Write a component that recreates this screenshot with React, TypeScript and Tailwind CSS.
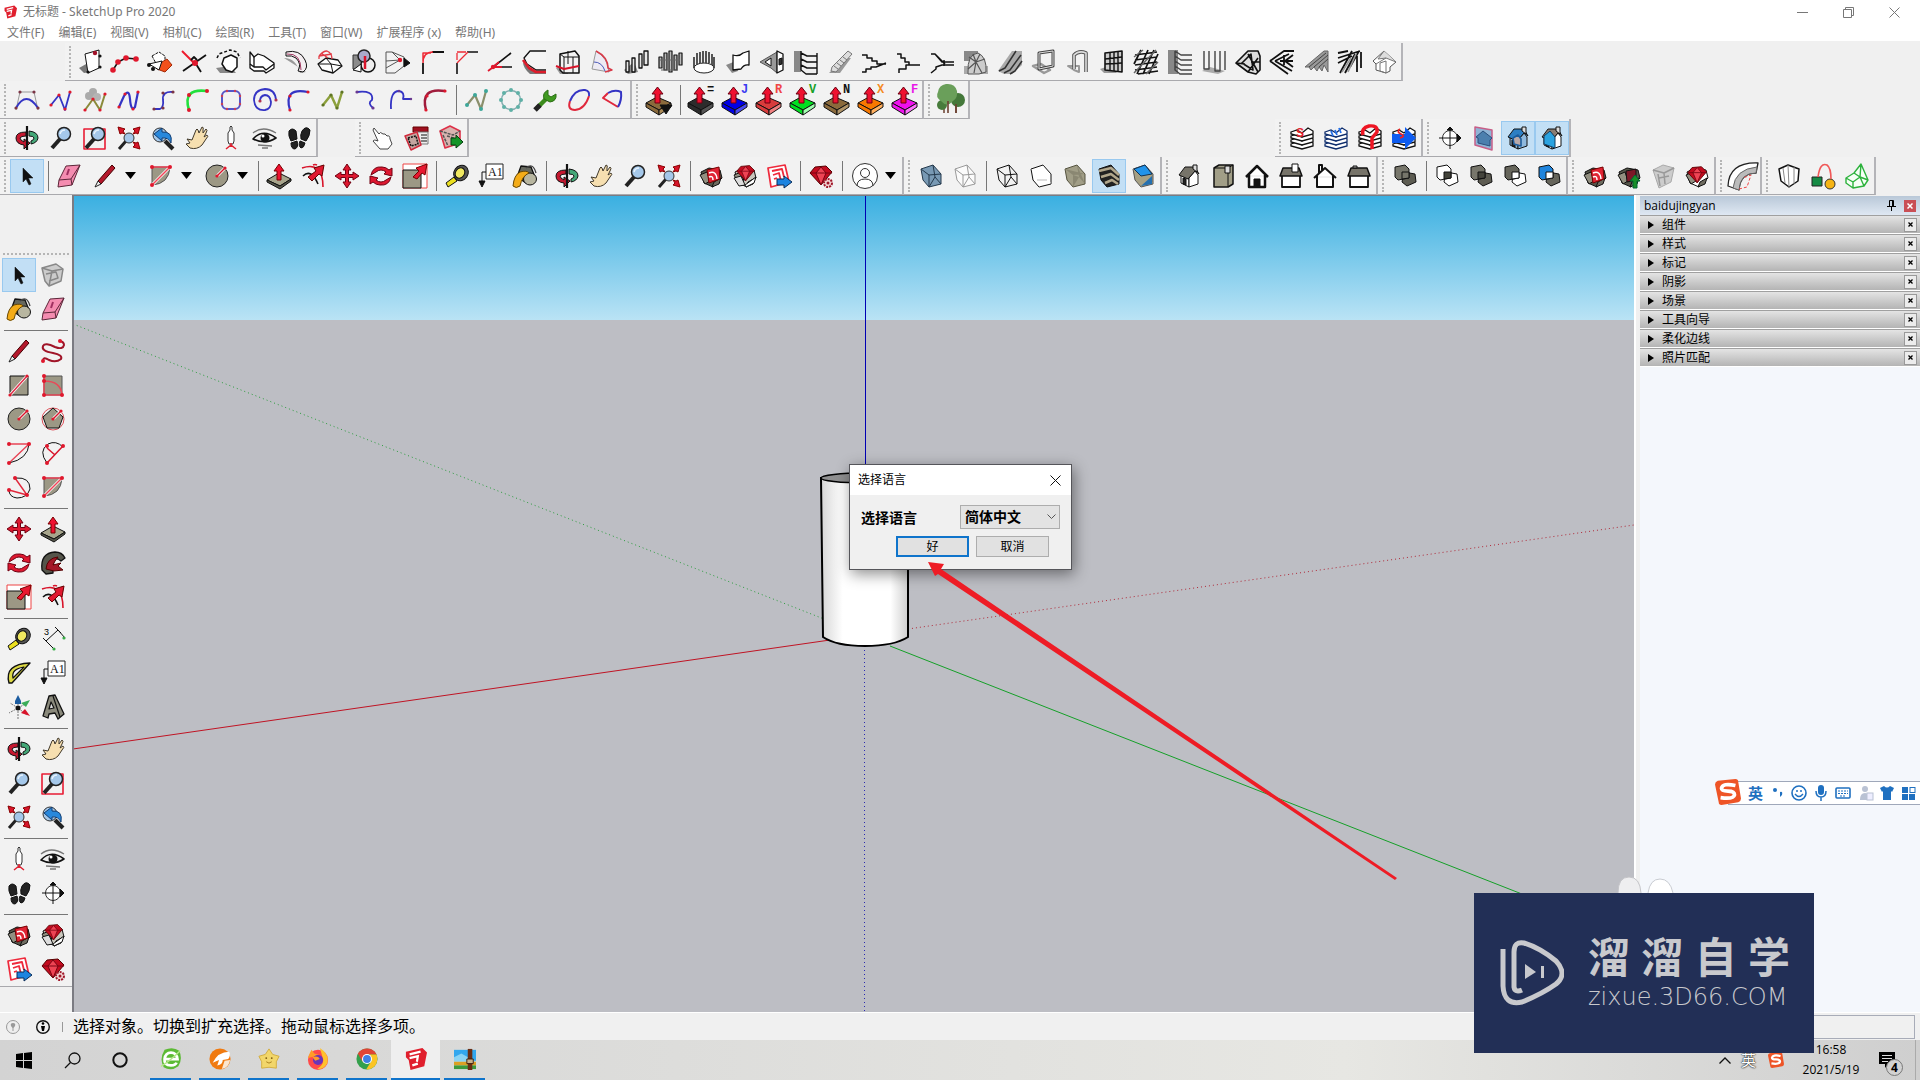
import type { ReactNode } from "react";

interface ShapeProps {
  d: string
  f?: string
  s?: string
  w?: number
  dash?: string
}

function P({ d, f = "none", s = "#111", w = 1, dash }: ShapeProps) {
  return <path d={d} fill={f} stroke={s} strokeWidth={w} strokeDasharray={dash} strokeLinejoin="round" />
}

function Dots({ at, c = "#e0182d", r = 1.6 }: { at: number[][], c?: string, r?: number }) {
  return <>{at.map(([x, y]) => <circle key={`${x}-${y}`} cx={x} cy={y} r={r} fill={c} />)}</>
}

const RED = "#d8142a"
const TAUPE = "#9c9885"
const BLUE = "#3434c4"

function PushIcon({ top, side, letter, color }: { top: string, side: string, letter?: string, color?: string }) {
  return (
    <>
      <P d="M-1 15L10 9L24 15L12 22Z" f={top} />
      <P d="M-1 15L12 22V27L-1 19Z" f={top} />
      <P d="M24 15L12 22V27L24 19Z" f={side} />
      <P d="M8 15V6H5L10.500 -1L16 6H13V15Z" f="#ee1130" s="#6a0010" />
      {letter && <text x="18" y="5" fontSize="12" fontWeight="700" fontFamily="Liberation Mono, monospace" fill={color}>{letter}</text>}
    </>
  )
}

function Cube({ fill, side = fill, line = "#111", wire }: { fill: string, side?: string, line?: string, wire?: boolean }) {
  return (
    <>
      <P d="M2 5L14 1L22 10V20L10 23L4 16Z" f={fill} s={line} />
      <P d="M14 1L16 13L22 20M2 5L10 11L22 10M10 11V23L16 13" f={wire ? "none" : side} s={wire ? line : "none"} w={1} />
    </>
  )
}

function Magnifier() {
  return (
    <>
      <P d="M3 22L11 13" s="#222" w={4} />
      <circle cx="15" cy="8" r="6.500" fill="#a5c8ea" stroke="#222" strokeWidth="1.500" />
      <P d="M11 8Q12 4 16 4" s="#e6f2fc" w={1.5} />
    </>
  )
}

function Box({ f = "#55564a" }: { f?: string }) {
  return (
    <>
      <P d="M2 8L10 4L21 6L23 14L14 23L5 19Z" f={f} />
      <P d="M1 11L8 8L11 17L6 20Z" f="#928f80" />
      <P d="M15 18L22 14L20 20L13 23Z" f="#6e6c60" />
    </>
  )
}

function Solids({ a, b, c }: { a: string, b: string, c: string }) {
  return (
    <>
      <P d="M11 8L22 10L23 18L14 22L9 18Z" f={b} />
      <P d="M2 3L12 1L16 5V14L5 16L2 13Z" f={a} />
      <P d="M9 8H16V14L9 15Z" f={c} />
    </>
  )
}

function House({ wall = "#fff", roof = "#77746a" }: { wall?: string, roof?: string }) {
  return (
    <>
      <P d="M4 11L12 15V23L4 19Z" f={wall} />
      <P d="M12 14L18 7L21 11V20L12 23Z" f={wall} />
      <P d="M2 11L8 3H18L22 10L18 7L11 15Z" f={roof} />
      <P d="M16 1H20V8L16 5Z" f="#ddd" />
      <P d="M6 14V20L9 21V15Z" f="#222" />
    </>
  )
}

function Layers({ c, children }: { c: string, children?: ReactNode }) {
  return (
    <>
      {[18, 14, 10, 6].map((y) => (
        <path key={y} d={`M1 ${y}L7 ${y - 2}L12 ${y + 1}L18 ${y - 4}L23 ${y - 1}V${y + 2}L12 ${y + 5}L1 ${y + 2}Z`} fill="#fff" stroke={c} strokeWidth="1.300" />
      ))}
      {children}
    </>
  )
}

const gem = (
  <>
    <P d="M1 9L6 3L17 2L23 8L12 21Z" f="#c40c20" s="#500" />
    <P d="M1 9H23M7 9L12 21L17 9L12 3Z" f="#ee4454" s="#7a0412" />
  </>
)

const icons: Record<string, ReactNode> = {
  // modelling plug-ins
  face: <><P d="M-1 18L8 13L10 22L4 23Z" f="#777" s="none" /><P d="M5 4L19 0V18L8 23Z" f="#fff" /><Dots at={[[15, 3]]} c="#a3122a" r={2.2} /><Dots at={[[8, 22], [20, 17], [20, 6]]} c="#111" /></>,
  nodes: <><P d="M-1 20L4 12L12 8L22 9" w={1.5} /><Dots at={[[-1, 20], [4, 12], [12, 8], [22, 9]]} r={2.8} /></>,
  orangeBox: <><P d="M4 6L11 2L17 6V13L10 17Z" f="#fff" dash="3 1" /><P d="M14 12L19 9L24 15L17 22L9 19Z" f="#f2501a" s="#a32a08" /><P d="M1 14L14 11L11 20Z" f="#fff" /><Dots at={[[1, 15], [5, 19]]} c="#111" r={2} /></>,
  cross: <><P d="M0 1L11 12" s="#ee1c2e" w={2} /><P d="M1 21L24 5M9 10L12 7L15 10M14 14L19 22" w={1.8} /><Dots at={[[13, 13]]} r={3} /></>,
  hexDash: <><P d="M0 18L14 16L20 23H4Z" f="#888" s="none" /><P d="M1 8L3 4L14 0L21 2L24 8" dash="3 2" w={1.5} /><P d="M8 8L15 5L21 8V17L16 22L10 20L6 14Z" f="#fff" w={1.5} /></>,
  block: <><P d="M0 2V18L4 21H14L16 23L24 18V13L14 6L8 4L4 7Z" f="#fff" w={1.3} /><P d="M0 14L4 17H13L16 20L24 14M4 7V17" w={1.3} /></>,
  tube: <><P d="M0 8Q12 8 16 23L22 22" f="#999" s="none" /><P d="M2 2Q16 -1 21 10Q25 18 19 22L14 21Q18 14 12 8Q8 5 2 6Z" f="#f4eef1" /><P d="M3 4Q17 3 17 20" s="#a33b63" /></>,
  dome: <><P d="M0 14L8 8L20 10L24 16L15 23L4 20Z" f="#fff" w={1.3} /><P d="M8 8L13 14L24 16M0 14L13 14L15 23" /><P d="M1 6Q5 1 9 1Q14 3 14 9M1 6L14 4M3 3L10 8M1 6V9" s="#e23b45" w={1.3} /></>,
  sphere: <><P d="M1 5H12V19H1Z" f="#8b8b8b" s="#333" /><circle cx="16" cy="15" r="7" fill="#eee" stroke="#111" strokeWidth="1.500" /><circle cx="12" cy="6" r="6" fill="#aaaacb" stroke="#222" strokeWidth="1.500" /><P d="M13 6V19" s={RED} w={2.5} /><P d="M1 20L9 14L9 22Z" f="#fff" /></>,
  prism: <><P d="M0 2H6L18 7V16L9 23H0Z" f="#f2f2f2" s="#555" /><P d="M0 11L14 10M0 18L14 10M6 2L14 10" s="#555" /><P d="M18 8L24 13L18 17Z" f="#111" /><Dots at={[[14, 10]]} r={2.2} /></>,
  fillet: <><P d="M3 24V13M12 2H24" w={1.8} /><P d="M3 13Q3 2 13 2M3 11V3H11" s="#ee2b36" w={1.5} /></>,
  chamfer: <><P d="M3 24V13M13 2H24" w={1.6} /><P d="M3 13L14 2M3 3V10M3 2H12" s="#ee2b36" w={1.3} /></>,
  angle: <><P d="M4 18L23 3M6 17H24" w={1.6} /><P d="M11 12L5 17H14M0 21L8 15" s="#e0182d" w={1.8} /><Dots at={[[5, 17]]} r={2.2} /></>,
  roundL: <><P d="M1 12Q8 22 24 22V24H8Q1 18 1 12Z" f="#777" s="none" /><P d="M24 1L8 1L2 8L5 14L14 20H24" f="#f4f4f4" w={1.3} /><P d="M1 10L7 18L14 22H24" s="#dd1c2b" w={2.6} /></>,
  frameRed: <><P d="M0 18L12 14V24H4Z" f="#999" s="none" /><P d="M4 4L19 1L23 6V23H7L4 20Z" f="#f3f3f3" w={1.5} /><P d="M4 4L8 7H23M8 7V23M17 7V23M12 1V14" /><P d="M0 16L8 19L23 16" s={RED} w={2} /></>,
  sail: <><P d="M6 1L2 19L19 22Q18 8 6 1Z" f="#edeaf3" s="#999" /><P d="M6 1Q18 7 18 18L22 20L15 22" s="#d83a48" w={1.5} /><P d="M4 12Q12 12 15 21" s="#4a59b8" /></>,
  bars: <><P d="M0 20L10 12L14 22L4 24Z" f="#888" s="none" /><P d="M2 11H5V22H2ZM8 8H11V22H8ZM15 4H18V18H15ZM20 1H24V15H20Z" f="#e8e8e8" w={1.3} /></>,
  bars2: <><P d="M1 7H4V18H1ZM6 3H9V20H6ZM11 1H14V22H11ZM16 5H19V20H16ZM21 3H24V15H21Z" f="#bbb" w={1.2} /><P d="M3 20H20M2 10H22" s="#666" /></>,
  fence: <><ellipse cx="12" cy="18" rx="10" ry="5" fill="#fff" stroke="#222" /><P d="M2 18V7M5 15V3M8 13V2M11 13V1M14 13V1M17 13V2M20 15V4M22 18V7" s="#444" w={1.8} /></>,
  flag: <><P d="M0 15L10 11L12 21L6 23Z" f="#888" s="none" /><P d="M7 5Q13 7 17 3L23 1V15Q18 14 15 19L7 20Z" f="#fff" w={1.3} /></>,
  triWindow: <><P d="M0 12L17 2V23L11 18Z" f="#999" s="#555" /><P d="M5 12L11 8V16Z" f="#fff" /><P d="M17 1L23 4V20L17 23Z" f="#fff" w={1.3} /><P d="M19 9L22 8V14L19 15Z" f="#333" /></>,
  shelves: <><P d="M0 1H7V22H0Z" f="#888" s="none" /><P d="M7 1V20L12 24H23M7 3L13 6H23M7 9L13 12H23M7 15L13 18H23M23 3V24" f="#eee" w={1.4} /></>,
  ramp: <><P d="M1 23L16 8H23L12 23Z" f="#999" s="none" /><P d="M4 17L20 1L24 4L8 22L3 21Z" f="#ddd" s="#777" /><P d="M6 16L10 19M9 13L13 16M12 10L16 13M15 7L19 10" s="#777" /></>,
  stairsA: <P d="M0 5H5V8H10V11H15V14H24M0 22H4V19H9V17H14L24 13" w={1.5} />,
  stairsB: <P d="M1 4H5V8H9V12H13V15H24M3 23V19H10V15H24" w={1.5} />,
  stairsC: <P d="M1 4H5L12 12H24M1 23L6 19V17L12 15H24M6 5L15 14M14 10V16" w={1.5} />,
  spiral: <><P d="M0 1H14V11H0Z" f="#888" s="none" /><P d="M0 16H24V24H0Z" f="#aaa" s="none" /><P d="M4 23Q3 4 14 3Q23 7 22 22L15 24H4Z" f="#ccc" s="#555" /><P d="M12 12L5 7M12 12L9 4M12 12L16 4M12 12L21 9M12 12L4 19M12 12L10 23M12 12L18 23" w={1.2} s="#555" /></>,
  escalator: <><P d="M0 21L14 1H24V15L14 24H6Z" f="#aaa" s="none" /><P d="M1 21L7 18L18 1M6 23L12 20L23 5M12 24L17 21L24 11" w={1.5} s="#333" /></>,
  frameBox: <><P d="M1 16L9 14L18 20L12 23Z" s="#999" w={2.5} /><P d="M7 3L21 1V16L7 19Z" f="none" s="#444" w={3} /><P d="M7 3L21 1V16L7 19Z" s="#ddd" /></>,
  arch: <><P d="M2 16H13V22L8 20Z" s="#999" w={2} /><P d="M8 19V5Q13 0 20 3V22" s="#555" w={3.6} /><P d="M8 19V5Q13 0 20 3V22" s="#ddd" w={1.6} /></>,
  grid: <><P d="M0 19L9 16L17 23H4Z" f="#999" s="none" /><P d="M5 3L22 1V22L5 20Z" f="#ccc" w={1.6} /><P d="M10 2V21M14 2V21M18 2V21M5 9L22 7M5 14L22 13" w={1.4} /></>,
  weave: <><P d="M1 5L23 2M1 10L23 7M1 15L23 12M1 20L23 17M3 24L14 0M9 24L20 0M15 24L24 4M0 14L7 0M4 24L24 21" w={1.7} /><P d="M0 7L9 0M0 23L22 0M12 24L24 12" s="#666" w={1.5} /></>,
  louvre: <><P d="M0 0H10V24H0Z" f="#888" s="none" /><P d="M7 1L13 5H24M7 6L13 10H24M7 11L13 15H24M7 16L13 20H24M7 1V20L12 24H24" s="#444" w={1.5} /></>,
  panels: <><P d="M0 21L8 17L23 21L16 24Z" f="#aaa" s="none" /><P d="M2 1V19H7V1M13 1V21H18V1M23 1V20" s="#444" w={1.4} /></>,
  trussA: <><P d="M0 13L12 1H22L24 6V20L20 24L12 22Z" f="#ddd" w={1.6} /><P d="M6 13L15 4L17 20ZM15 12H24M12 4L22 22M0 13L9 14M12 22L22 8" w={1.6} /></>,
  trussB: <P d="M0 11L14 1H24M0 11L18 24M5 11L19 4M5 11L22 21M10 11H23M14 5V15M15 11L23 5M15 11L23 17" w={1.8} />,
  slats: <><P d="M1 17L20 1H24V22L20 15L18 21L15 17L13 21L10 17L7 20L5 17Z" f="#999" s="#666" /><P d="M5 17L22 3M10 17L24 5M15 17L24 9" s="#444" /></>,
  rafters: <><P d="M0 3L10 1M0 8L22 1M2 23L14 1M0 13L14 6M7 23L17 4M12 17L21 1M19 22V6M23 18V2" w={1.8} /><P d="M4 22L13 8M10 22L18 4" s="#999" w={1.6} /></>,
  roof: <><P d="M1 11L12 1L24 12L18 17V21L14 23L4 20V14Z" f="#fff" s="#555" /><P d="M12 1L6 9L14 8L24 12" f="#ddd" s="#777" /><P d="M8 13V21L14 23V11ZM4 14L14 8" s="#777" /></>,
  // curves
  bezierArc: <><P d="M5 4H19M5 4L1 22M19 4L23 22" s="#999" /><P d="M1 20Q11 2 23 20" s={BLUE} w={2} /><Dots at={[[5, 4], [19, 4], [1, 20], [23, 20]]} c="#7c3444" /></>,
  polyBlue: <><P d="M2 17L10 7L16 22L21 4" s={BLUE} w={1.8} /><Dots at={[[2, 17], [10, 7], [16, 21], [21, 4]]} /></>,
  polyCloud: <><circle cx="6" cy="8" r="4" fill="#aaa" /><circle cx="10" cy="4" r="4" fill="#aaa" /><circle cx="14" cy="9" r="4" fill="#b4b4b4" /><P d="M2 22L10 11L17 22L22 6" s="#8a8a3a" w={2} /><Dots at={[[2, 22], [10, 11], [17, 22], [22, 6]]} /></>,
  sine: <><P d="M2 19L7 8Q12 0 13 11Q14 24 18 19L21 4" s={BLUE} w={2.2} /><Dots at={[[2, 19], [8, 6], [16, 21], [21, 4]]} /></>,
  sCurve: <><P d="M3 21H9Q13 19 12 12Q11 3 22 4" s={BLUE} w={1.8} /><Dots at={[[3, 21], [12, 20], [12, 5], [22, 4]]} c="#7c3444" /></>,
  greenArc: <><P d="M4 22Q-3 0 22 3" s="#22e03c" w={2.6} /><Dots at={[[4, 22], [4, 7], [22, 3]]} r={2} /></>,
  roundSq: <><rect x="3" y="3" width="18" height="18" rx="5" fill="none" stroke="#5555c8" strokeWidth="2" /><Dots at={[[8, 3], [16, 3], [3, 8], [21, 8], [3, 16], [21, 16], [8, 21], [16, 21]]} r={1.2} c="#c8405a" /></>,
  swirl: <><P d="M23 12Q22 1 12 1Q1 2 1 12Q2 23 12 22Q18 21 18 14Q17 7 12 7Q7 8 7 13" s={BLUE} w={1.8} /><Dots at={[[23, 12], [7, 13]]} c="#b03050" /></>,
  arcBlue: <><P d="M3 22Q-4 -1 21 4" s={BLUE} w={2.2} /><Dots at={[[3, 22], [3, 8], [21, 4]]} /></>,
  polyGreen: <><P d="M2 17L10 7L16 20L21 4" s="#8ca03c" w={2.5} /><Dots at={[[2, 17], [10, 7], [16, 20], [21, 4]]} c="#5f7524" /></>,
  hookA: <><P d="M2 4Q19 2 17 12Q12 15 18 20" s={BLUE} w={1.8} /><Dots at={[[2, 4], [18, 20]]} c="#6a3a90" /></>,
  hookB: <><P d="M2 21Q1 3 10 3Q16 4 14 11H22" s={BLUE} w={1.8} /><Dots at={[[22, 11], [10, 3]]} c="#6a3a90" r={1.2} /></>,
  arcRed: <><P d="M3 22Q-3 -1 22 3" s="#a01c3c" w={2.5} /><Dots at={[[3, 22], [4, 8], [22, 3]]} /></>,
  polyTeal: <><P d="M2 17L10 7L16 21L21 3" s="#8a8f6c" w={2.2} /><Dots at={[[2, 17], [10, 7], [16, 21], [21, 3]]} c="#3da79a" r={2} /></>,
  ring: <><circle cx="12" cy="12" r="9.500" fill="none" stroke="#84aeb0" strokeWidth="1.500" /><Dots at={[[12, 2], [19, 5], [22, 12], [19, 19], [12, 22], [5, 19], [2, 12], [5, 5]]} c="#5fb0a6" r={2} /></>,
  wrench: <><P d="M5 19L14 10" s="#3c8c1c" w={4.5} /><P d="M15 2L15 7L18 9L23 6Q24 13 17 14L11 11Q9 5 15 2Z" f="#3f9a20" s="#2b6e14" /><P d="M2 22L7 17" s="#222" w={5} /></>,
  loop: <><P d="M3 13Q0 22 8 22Q18 21 22 8" s="#e0283c" w={2} /><P d="M3 13Q8 1 18 2Q23 3 22 8" s={BLUE} w={2} /></>,
  pie: <><P d="M17 19L2 10L7 5" s="#e0283c" w={2} /><P d="M7 5Q14 1 20 4Q21 12 17 19" s={BLUE} w={2} /></>,
  pushMenu: <><PushIcon top="#8a6a3c" side="#aa8a58" /><P d="M13 17H25L19 26Z" f="#111" /></>,
  pushEq: <PushIcon top="#2c2c2c" side="#555" letter="=" color="#111" />,
  pushJ: <PushIcon top="#0000e6" side="#4a4af2" letter="J" color="#3a3af0" />,
  pushR: <PushIcon top="#d83c3c" side="#f08080" letter="R" color="#f04444" />,
  pushV: <PushIcon top="#00e020" side="#a0ffb0" letter="V" color="#18a028" />,
  pushN: <PushIcon top="#8a6a3c" side="#b09468" letter="N" color="#111" />,
  pushX: <PushIcon top="#f87800" side="#ffb060" letter="X" color="#f58a1e" />,
  pushF: <PushIcon top="#ee10ee" side="#ff70ff" letter="F" color="#e818e8" />,
  tree: <><P d="M5 17V25M17 15V25" s="#6b4030" w={1.5} /><circle cx="3" cy="17" r="5" fill="#487c3c" /><circle cx="19" cy="12" r="7" fill="#44783a" /><P d="M-1 4Q0 -3 7 -4Q16 -5 18 3Q19 10 14 13Q8 20 2 13Q-4 9 -1 4Z" f="#6a9f5a" s="none" /><P d="M9 13V25M17 16V25" s="#6b4030" w={1.6} /></>,
  // camera
  orbit: <><P d="M11 6Q1 6 1 12Q1 18 9 19V23L15 17L9 13V16Q5 14 5 12Q6 10 11 10Z" f="#c41830" /><P d="M14 5Q23 6 23 12Q22 17 16 18V15Q19 14 19 12Q19 10 14 10Z" f="#44a878" /><P d="M12 0V24" w={2.2} /></>,
  zoom: <Magnifier />,
  zoomWindow: <><P d="M1 3H22V23H1Z" s="#e81c34" w={1.6} /><Magnifier /></>,
  zoomExtents: <><P d="M2 23L9 15" s="#222" w={3} /><circle cx="12" cy="12" r="5" fill="#a5c8ea" stroke="#333" /><P d="M1 1L8 3L6 5L8 8L5 7L3 8ZM23 1L16 3L18 5L16 8L19 7L21 8ZM23 23L16 21L18 19L16 16L19 17L21 16Z" f={RED} s="#800" /></>,
  previous: <><circle cx="9" cy="9" r="7" fill="#a5c8ea" stroke="#333" /><P d="M14 15L22 23" s="#222" w={4} /><P d="M3 8L11 2V6Q22 5 20 17Q17 11 11 12V15Z" f="#2888dc" s="#123c70" /></>,
  hand: <P d="M2 13L7 14L11 4Q12 2 13 4L14 7L17 1Q19 1 18 4L18 7L21 3Q23 4 21 7L19 11L22 9Q24 10 21 13L17 19Q12 24 5 22L1 18L5 17Z" f="#f6dfb0" s="#40382a" />,
  camera: <><P d="M11 1Q12 -1 13 1V4L15 7V15L14 18H10L9 15V7L11 4Z" f="#fff" s="#333" /><P d="M7 23L12 19L17 23M12 17V21" s="#e02030" w={1.5} /></>,
  look: <><P d="M0 13Q10 2 23 12Q12 19 0 13Z" f="#eee" s="#111" w={1.6} /><circle cx="12" cy="12" r="4.500" fill="#111" /><circle cx="10" cy="10" r="1.500" fill="#fff" /><P d="M0 7Q10 -1 23 7M5 19L19 20M9 22H15" s="#777" w={1.3} /></>,
  walk: <><P d="M2 5Q5 1 9 5L10 13L4 15Q1 10 2 5ZM4 17L10 15Q12 21 8 23Q4 23 4 17ZM13 15L18 17Q17 22 14 22Q11 20 13 15Z" f="#222" /><P d="M15 5Q19 -1 23 4Q23 10 19 15L14 13Q13 9 15 5Z" f="#222" /></>,
  pointer: <P d="M4 2L9 8Q10 5 13 8Q15 7 17 10Q20 9 20 13L22 18L18 23H10L3 15Q4 13 8 15L3 4Z" f="#fff" s="#444" />,
  dcOptions: <><P d="M9 1H24V6H9Z" f="#a01020" s="#600" /><P d="M10 6H24V18H10Z" f="#eee" s="#777" /><P d="M17 9H23M17 12H23M17 15H23" /><P d="M1 10L13 6L17 19L7 24Z" f="#c4a6a0" s="#d02a3c" w={1.5} /><P d="M4 12L12 10L14 18L7 20Z" w={1.5} dash="2 1" /></>,
  dcAttr: <><P d="M2 5L12 0L22 5V17L7 22Z" f="#d8b4b0" s="#dd3048" w={1.6} /><P d="M2 5L15 9L22 5M9 10L16 12V20M5 9L10 20" s="#555" dash="3 1" w={1.5} /><P d="M13 12H18V9L25 16L18 22V19H13Z" f="#159428" s="#064010" /></>,
  // layers and sections
  layerS: <Layers c="#111"><text x="6" y="11" fontSize="12" fontWeight="700" fill="#e2202c" fontFamily="Liberation Sans, sans-serif">S</text></Layers>,
  layerW: <Layers c="#0d2c6c"><P d="M7 5L9 10M11 4L13 9M15 2L17 7" s="#2470e8" w={1.8} /></Layers>,
  layerR: <Layers c="#111"><P d="M5 9Q3 2 11 0Q20 -1 19 6L14 12V23" s="#ee1624" w={3.5} /></Layers>,
  layerB: <Layers c="#111"><P d="M0 8H13V1L24 12L13 23V17H0Z" f="#0e5cf0" s="none" /><P d="M8 3Q4 6 9 8T8 12" s="#e22" w={1.8} /></Layers>,
  section: <><circle cx="12" cy="12" r="7.500" fill="#fff" stroke="#333" /><P d="M1 12H23M12 1V23" /><P d="M19 8L23 12L19 16ZM9 4H15L12 1Z" f="#111" /></>,
  sectionPlane: <><P d="M3 1L20 4V24L3 19Z" f="#8fb4d6" s="#c85f88" w={1.5} /><P d="M4 11L11 5L20 12L18 14V20L6 17V12Z" f="#4c7fae" s="#2a4f7c" /></>,
  sectionCut: <><House wall="#8fb9dd" roof="#2d7fc4" /><P d="M7 12L12 9L15 13V20L8 18Z" f="#b9a9a9" s="#1c5c9c" w={1.6} /></>,
  sectionFill: <><House roof="#8a7d72" /><P d="M4 10L10 5L15 11V22L4 18Z" f="#2ba3e0" s="#123c60" /></>,
  // main tools
  select: <P d="M8 4V18L11 15L14 21L16 20L13.500 14H18Z" f="#111" w={0.5} />,
  eraser: <><P d="M9 2L23 1L15 21L1 23L2 16Z" f="#f48cb0" s="#5c2638" /><P d="M2 16L14 15L23 1M14 15L15 21" s="#5c2638" /><P d="M12 5L10 11" s="#a03060" w={2} /></>,
  pencil: <><P d="M5 17L19 1L22 4L8 20Z" f="#b4182c" s="#400" /><P d="M5 17L2 23L8 20Z" f="#eee" s="#222" /></>,
  arcFill: <><P d="M3 3H21Q20 20 3 21Z" f={TAUPE} s="#555" /><P d="M3 21L21 3" s="#fff" w={3} /><P d="M3 21L21 3H3" s="#f04458" w={1.5} /><Dots at={[[3, 3], [21, 3], [3, 21]]} r={2} /></>,
  circle: <><circle cx="12" cy="12" r="11" fill={TAUPE} stroke="#222" /><P d="M12 12L20 4" s="#fff" w={3} /><P d="M12 12L20 4" s={RED} w={1.5} /><Dots at={[[12, 12], [20, 4]]} /></>,
  pushpull: <><P d="M0 16L12 9L24 15L13 22Z" f="#a7a58c" /><P d="M0 16V18L13 25L24 17V15L13 22Z" f="#55564a" /><P d="M10 16V7H7L12 0L17 7H14V16Z" f="#ee1130" s="#700" /></>,
  offset: <><P d="M1 4Q22 -3 22 23M12 1Q14 0 16 1" s={RED} w={1.6} /><P d="M2 12Q10 4 17 20" w={1.6} /><P d="M7 13L15 7L13 4L23 1L21 12L18 10L11 17Z" f="#e01830" s="#600" /></>,
  move: <P d="M12 0L16 6H13.500V10.500H18V8L24 12L18 16V13.500H13.500V18H16L12 24L8 18H10.500V13.500H6V16L0 12L6 8V10.500H10.500V6H8Z" f="#de1830" s="#700010" />,
  rotate: <P d="M2 11Q4 2 13 3Q17 3 20 6L23 4V12L15 10L17 8Q12 4 7 8ZM22 13Q20 22 11 21Q7 21 4 18L1 20V12L9 14L7 16Q12 20 17 16Z" f="#de1830" s="#700010" />,
  scale: <><P d="M0 0H24V24H0Z" s="#e44" f="#fff" /><P d="M0 6H18V24H0Z" f={TAUPE} /><P d="M10 13L16 7L13 4L24 0L22 11L19 9L14 15Z" f="#e81830" s="#700" /></>,
  tape: <><P d="M1 19L9 13L12 17L3 23Z" f="#ece020" /><ellipse cx="16" cy="9" rx="7" ry="8" fill="#555" stroke="#111" transform="rotate(35 16 9)" /><ellipse cx="15" cy="9" rx="4.500" ry="5.500" fill="#f0e860" stroke="#111" transform="rotate(35 15 9)" /></>,
  text: <><P d="M7 0H24V15H7Z" f="#fff" s="#222" /><text x="9" y="12" fontSize="12" fontFamily="Liberation Serif, serif" fill="#111">A1</text><P d="M7 8H3V18" /><P d="M0 17H6L3 23Z" f="#111" /></>,
  paint: <><P d="M8 2L18 3L22 13L13 19L4 13Z" f="#66685e" w={1.3} /><P d="M13 4Q20 -2 23 9" s="#444" w={1.3} /><ellipse cx="17" cy="15" rx="6.500" ry="6" fill="#b8b6a0" stroke="#111" /><P d="M0 22Q1 11 7 8Q14 6 16 9Q9 12 7 22Q3 25 0 22Z" f="#f4ac18" s="#6a4800" /></>,
  warehouse: <><Box /><P d="M8 6L20 3L21 15L10 19Z" f="#e02434" s="#700" /><P d="M10 9Q17 6 18 15M10 13Q14 11 14 16" s="#fff" w={1.5} /></>,
  extWarehouse: <><Box f="#c9c7bd" /><g transform="translate(3 0) scale(.8)">{gem}</g><P d="M1 14L8 12L12 21L6 22Z" f="#ddd" /><P d="M12 21L23 13L21 19L13 23Z" f="#fff" /></>,
  layout: <><P d="M1 4L18 1L22 18L4 23Z" f="#fff" s="#ee2a3c" w={1.7} /><P d="M5 7L15 5L17 13M6 11L12 9L14 17M7 15L10 14" s="#ee2a3c" w={1.8} /><P d="M10 15H17V12L25 18L17 24V21H10Z" f="#1c84e0" s="#0a2c58" /></>,
  extManager: <>{gem}<circle cx="19" cy="19" r="4" fill="#f2d4d4" stroke="#a0182a" strokeWidth="2" strokeDasharray="2 1" /><circle cx="19" cy="19" r="1.500" fill="#a0182a" /></>,
  user: <><circle cx="12" cy="12" r="12.500" fill="#fff" stroke="#333" /><circle cx="12" cy="9" r="4.500" fill="none" stroke="#333" /><P d="M4 22Q4 15 12 15T20 22" s="#333" /></>,
  // styles
  xray: <Cube fill="#7899b4" line="#24394c" wire />,
  backEdges: <Cube fill="#fbfbfb" line="#999" wire />,
  wire: <Cube fill="none" wire />,
  hidden: <><Cube fill="#fff" /><P d="M8 16H18" s="#bbb" /></>,
  shaded: <Cube fill="#a19e87" side="#8a8772" line="#55533f" />,
  textured: <><Cube fill="#222" /><P d="M2 7L14 4L22 11M4 13L14 10L22 16M8 19L15 16L21 20" s="#b2a78c" w={2.5} /></>,
  mono: <><Cube fill="#a7a184" line="#555" /><P d="M3 5L14 1L21 10L10 12Z" f="#2294ea" s="#135" /><P d="M10 22L21 12V20Z" f="#2470b0" s="none" /></>,
  // views
  iso: <House />,
  top: <><P d="M3 4L8 1H22V20L17 23H3Z" f="#a19e87" w={1.5} /><P d="M3 4H17V23M17 4L22 1" /><P d="M14 2H19V9H14Z" f="#ddd" /></>,
  front: <><P d="M1 13L12 2L23 13M4 11V23H20V11" f="#fff" w={2.5} /><P d="M9 15H15V23H9Z" f="#111" /></>,
  right: <><P d="M3 11H21V23H3Z" f="#fff" w={1.8} /><P d="M4 4H20L23 12H1Z" f="#77746a" w={1.5} /><P d="M13 0H19V8H13Z" f="#fff" /></>,
  back: <P d="M6 9V1H9V6M1 14L12 4L23 14M4 12V23H20V12" f="#fff" w={2} />,
  left: <><P d="M3 11H21V23H3Z" f="#fff" w={1.8} /><P d="M4 4H20L23 12H1Z" f="#77746a" w={1.5} /><P d="M6 2H10V4H6Z" f="#aaa" /></>,
  shell: <Solids a="#77766b" b="#5d5c52" c="#77766b" />,
  intersect: <Solids a="#fff" b="#fff" c="#44443c" />,
  union: <Solids a="#77766b" b="#5d5c52" c="#44443c" />,
  subtract: <Solids a="#66655b" b="#fff" c="#fff" />,
  trim: <Solids a="#1f84dc" b="#66655b" c="#fff" />,
  shareUp: <><Box /><P d="M9 7L19 5V16L10 18Z" f="#7c1828" /><P d="M16 24V17H13L18 11L23 17H20V24Z" f="#189028" s="#063" /></>,
  shareGrey: <><P d="M2 6L12 1L23 4L20 18L8 24Z" f="#ccc" s="#aaa" /><P d="M2 6L13 9L23 4M7 10L9 22M13 9L14 20M8 14L18 12" s="#999" w={1.5} /></>,
  shareGem: <><Box f="#fff" /><g transform="translate(2 1) scale(.85)">{gem}</g></>,
  pipe: <><P d="M-3 22Q-2 -2 27 -1L25 9Q9 9 8 26Z" f="#fff" s="#222" w={1.3} /><P d="M2 24Q4 5 26 3L25 9Q9 9 8 26Z" f="#bbb" s="#666" /><P d="M8 25L16 23L20 11L12 14" s="#e44" dash="3 2" /></>,
  stone: <><P d="M2 5L11 1L22 5L21 17L12 23L4 17Z" f="#fff" w={1.5} /><P d="M11 1L12 23M6 4L8 19M17 3L17 20" s="#888" /></>,
  morph: <><P d="M1 13H11V22H1Z" f="#158a44" s="#222" /><circle cx="19" cy="20" r="5" fill="#f6b414" stroke="#333" /><P d="M7 13Q9 -2 16 1Q20 4 20 15" s="#f05858" w={1.6} /></>,
  mesh: <P d="M1 14L9 9L16 0L23 16L19 22L8 24L1 19ZM9 9L15 13L23 16M15 13L16 0M1 14L8 18L15 13L19 22M8 18V24" f="#f6fff6" s="#2cb23c" w={1.4} />,
  // large tool set
  component: <><P d="M1 5L15 1L22 6L20 18L8 23L4 18Z" f="#ccc" s="#888" w={1.5} /><P d="M1 5L11 8L22 6M11 8L8 23M5 11L15 9L17 15L8 18" s="#888" w={1.5} /></>,
  freehand: <><P d="M2 22Q2 17 8 21Q15 24 20 20Q22 16 12 14Q0 12 2 7Q4 3 14 8Q22 11 23 6Q23 3 19 2" s="#a01428" w={2} /><Dots at={[[2, 22], [19, 2]]} r={2} /></>,
  rect: <><P d="M3 3H21V22H3Z" f={TAUPE} /><P d="M3 22L20 3" s="#fff" w={3} /><P d="M3 22L20 3" s="#e0304a" w={1.5} /><Dots at={[[3, 22], [20, 3]]} /></>,
  rotRect: <><P d="M3 3H21V22H3Z" f={TAUPE} s="#555" /><P d="M3 3V22H21Q20 8 3 8" s="#e84a58" w={1.6} /><Dots at={[[3, 3], [3, 8], [3, 22], [21, 22]]} r={2} /></>,
  polygon: <><circle cx="12" cy="12" r="11" fill="none" stroke="#dd5058" /><P d="M2 10L12 1L22 10L18 21H6Z" f={TAUPE} /><P d="M12 12L20 4" s="#fff" w={3} /><P d="M12 12L20 4" s={RED} w={1.5} /><Dots at={[[12, 12], [20, 4]]} /></>,
  arcA: <><P d="M2 3H22L2 22" s="#e84456" w={1.4} /><P d="M22 3Q21 18 2 22" /><Dots at={[[2, 3], [22, 3], [2, 22]]} r={2} /></>,
  arcB: <><P d="M6 22Q-3 10 7 3Q15 -1 22 6" /><P d="M6 22L22 5M6 7L14 14" s={RED} w={1.5} /><Dots at={[[6, 22], [22, 5], [6, 5]]} r={2} /></>,
  arcC: <><P d="M9 3Q23 2 23 14Q20 23 10 23Q2 22 2 15" /><P d="M8 3L20 20L2 15" s="#e0283c" w={1.4} /><Dots at={[[8, 3], [20, 20], [2, 15]]} r={2} /></>,
  follow: <><P d="M1 19Q-1 2 14 1Q21 1 24 7L20 10Q16 6 12 9V22L5 23Z" f="#55554b" w={1.3} /><P d="M5 18Q6 7 17 6L14 10L12 14L20 12L17 15L22 19L13 20Z" f="#a41828" s="#500" /></>,
  dimension: <><P d="M5 14L17 3M5 14L13 22M17 3L24 11M2 11L8 17M14 0L20 6" /><text x="3" y="8" fontSize="9" fontFamily="Liberation Sans, sans-serif">3</text><Dots at={[[13, 22], [23, 11]]} c="#3aac48" /></>,
  protractor: <><P d="M2 22Q-3 3 23 2L5 22Z" f="#dcd844" w={1.4} /><P d="M6 17Q4 8 17 6Z" f="#f2f2f2" w={1.2} /></>,
  axes: <><P d="M11 13V3M11 13L20 8M11 13L20 20M11 13L2 18M11 13L3 8M11 13V24" s="#777" dash="2 1" /><P d="M8 6L11 0L14 6V9H8Z" f="#1c5ca0" s="none" /><P d="M14 8L23 5L19 12Z" f="#3aac58" s="none" /><P d="M14 18L18 14L23 21Z" f={RED} s="none" /><Dots at={[[11, 13]]} c="#111" r={2.5} /></>,
  text3d: <><P d="M2 21L8 1L14 0L23 19L17 24L14 18L8 19L7 23Z" f="#8a897b" w={1.3} /><P d="M10 7L8 14L13 13ZM12 1L19 22" f="#ddd" w={1.2} /></>,
}

const plugins = [
  "face", "nodes", "orangeBox", "cross", "hexDash", "block", "tube", "dome", "sphere", "prism", "fillet", "chamfer", "angle",
  "roundL", "frameRed", "sail", "bars", "bars2", "fence", "flag", "triWindow", "shelves", "ramp", "stairsA", "stairsB", "stairsC",
  "spiral", "escalator", "frameBox", "arch", "grid", "weave", "louvre", "panels", "trussA", "trussB", "slats", "rafters", "roof",
]
const curves = [
  "bezierArc", "polyBlue", "polyCloud", "sine", "sCurve", "greenArc", "roundSq", "swirl", "arcBlue", "polyGreen", "hookA", "hookB",
  "arcRed", "|", "polyTeal", "ring", "wrench", "loop", "pie",
]
const pushes = ["pushMenu", "|", "pushEq", "pushJ", "pushR", "pushV", "pushN", "pushX", "pushF"]
const cameras = ["orbit", "zoom", "zoomWindow", "zoomExtents", "previous", "hand", "camera", "look", "walk"]
const mainTools = [
  "select", "|", "eraser", "pencil", "v", "arcFill", "v", "circle", "v", "|", "pushpull", "offset", "move", "rotate", "scale", "|",
  "tape", "text", "paint", "|", "orbit", "hand", "zoom", "zoomExtents", "|", "warehouse", "extWarehouse", "layout", "|",
  "extManager", "|", "user", "v",
]
const styleTools = ["xray", "backEdges", "|", "wire", "hidden", "shaded", "textured", "mono"]
const sideGroups = [
  ["select", "component", "paint", "eraser"],
  ["pencil", "freehand", "rect", "rotRect", "circle", "polygon", "arcA", "arcB", "arcC", "arcFill"],
  ["move", "pushpull", "rotate", "follow", "scale", "offset"],
  ["tape", "dimension", "protractor", "text", "axes", "text3d"],
  ["orbit", "hand", "zoom", "zoomWindow", "zoomExtents", "previous"],
  ["camera", "look", "walk", "section"],
  ["warehouse", "extWarehouse", "layout", "extManager"],
]
const menus = ["文件(F)", "编辑(E)", "视图(V)", "相机(C)", "绘图(R)", "工具(T)", "窗口(W)", "扩展程序 (x)", "帮助(H)"]
const trays = ["组件", "样式", "标记", "阴影", "场景", "工具向导", "柔化边线", "照片匹配"]

function Icon({ name }: { name: string }) {
  return <svg className="h-6 w-6 overflow-visible" viewBox="0 0 24 24" aria-hidden="true">{icons[name]}</svg>
}

function ToolButton({ name, active, menu }: { name: string, active?: boolean, menu?: boolean }) {
  let style = "flex h-[34px] w-[34px] shrink-0 items-center justify-center"
  if (active) style = "flex h-[34px] w-[34px] shrink-0 items-center justify-center border border-[#99c9ef] bg-[#c2dff5]"
  if (menu) style = "flex h-[34px] w-[38px] shrink-0 items-center justify-center"
  return <button aria-label={name} className={style}><Icon name={name} /></button>
}

function Toolbar({ items, active = [] }: { items: string[], active?: string[] }) {
  return (
    <div className="flex h-[38px] shrink-0 items-center border-r-2 border-b border-r-[#b4b4b8] border-b-[#a9a9ad] bg-[#f2f2f2]">
      <div className="ml-1 mr-1 h-8 w-[2px] border-l-2 border-dotted border-[#b5b5b5]"></div>
      {items.map((item, index) => {
        if (item === "|") return <div key={index} className="flex h-[30px] w-2 justify-center"><div className="w-px bg-[#777]"></div></div>
        if (item === "v") {
          return (
            <button key={index} aria-label="更多" className="flex h-[34px] w-[18px] items-center pl-px">
              <svg className="h-[7px] w-[11px]" viewBox="0 0 11 7"><path d="M0 0H11L5.500 7Z" /></svg>
            </button>
          )
        }
        return <ToolButton key={index} name={item} active={active.includes(item)} menu={items[index + 1] === "v"} />
      })}
    </div>
  )
}

function TitleBar() {
  return (
    <header className="bg-white font-['Noto_Sans','Noto_Sans_CJK_SC',sans-serif] text-[12px] text-[#777]">
      <div className="flex h-6 items-center">
        <svg className="ml-1 h-[14px] w-[13px]" viewBox="0 0 24 24"><SketchUpMark /></svg>
        <h1 className="ml-[6px] grow">无标题 - SketchUp Pro 2020</h1>
        <div className="flex h-5 pr-[3px]">
          <button aria-label="最小化" className="flex w-[46px] items-center justify-center"><svg width="11" height="11"><path d="M0 5.500H11" stroke="#777" /></svg></button>
          <button aria-label="还原" className="flex w-[46px] items-center justify-center"><svg width="11" height="11"><path d="M.5 2.500H8.500V10.500H.5ZM2.500 2.500V.5H10.500V8.500H8.500" fill="none" stroke="#777" /></svg></button>
          <button aria-label="关闭" className="flex w-[46px] items-center justify-center"><svg width="11" height="11"><path d="M.5 .5L10.500 10.500M10.500 .5L.5 10.500" stroke="#777" /></svg></button>
        </div>
      </div>
      <nav className="flex h-[17px] items-center gap-[14px] pl-[7px]">
        {menus.map((menu) => <button key={menu} className="leading-4">{menu}</button>)}
      </nav>
    </header>
  )
}

function SketchUpMark() {
  return (
    <>
      <path d="M1 4L19 0L24 5L21 20L6 24L4 13L1 10Z" fill="#e01f2d" />
      <path d="M5 7L17 4M5 11L14 9L13 15M8 19L14 17" fill="none" stroke="#fff" strokeWidth="2.400" />
    </>
  )
}

function Scene() {
  return (
    <svg className="absolute inset-0 h-full w-full" viewBox="74 196 1560 816" preserveAspectRatio="xMidYMid slice">
      <defs>
        <linearGradient id="sky" x1="0" y1="0" x2="0" y2="1">
          <stop offset="0" stopColor="#34ade0" />
          <stop offset="1" stopColor="#bae3f5" />
        </linearGradient>
        <linearGradient id="body" x1="0" x2="1">
          <stop offset="0" stopColor="#d6d6d6" />
          <stop offset=".25" stopColor="#fff" />
          <stop offset=".8" stopColor="#fff" />
          <stop offset="1" stopColor="#cfcfcf" />
        </linearGradient>
      </defs>
      <path d="M70 190H1640V320H70Z" fill="url(#sky)" />
      <path d="M70 320H1640V1020H70Z" fill="#bdbec4" />
      <path d="M865.500 196V480" stroke="#0000b4" />
      <path d="M864.500 646V1012" stroke="#2a2ab0" strokeDasharray="1 3" />
      <path d="M73 749L830 640" stroke="#c01424" />
      <path d="M908 629L1634 525" stroke="#b02838" strokeDasharray="1 3" />
      <path d="M73 324L824 619" stroke="#2a9c3c" strokeDasharray="1 3" />
      <path d="M890 646L1634 938" stroke="#15a028" />
      <path d="M821 478L823 637Q836 646 865 646T908 637V478Z" fill="url(#body)" stroke="#000" strokeWidth="2" />
      <ellipse cx="865" cy="478" rx="44" ry="5" fill="#8f8f90" stroke="#000" strokeWidth="1.500" />
    </svg>
  )
}

function LanguageDialog() {
  return (
    <div role="dialog" aria-label="选择语言" className="absolute left-[775px] top-[268px] h-[106px] w-[223px] border border-[#55555a] bg-[#f0f0f0] text-[12px] text-black shadow-[2px_4px_14px_rgba(0,0,0,0.45)]">
      <div className="flex h-[30px] items-center justify-between bg-white pl-2 pr-[9px]">
        <span>选择语言</span>
        <button aria-label="关闭" className="p-px"><svg width="11" height="11"><path d="M.5 .5L10.500 10.500M10.500 .5L.5 10.500" stroke="#111" /></svg></button>
      </div>
      <div className="flex items-center justify-between pl-[11px] pr-[11px] pt-[10px]">
        <label htmlFor="language" className="text-[14px] font-bold">选择语言</label>
        <div className="relative">
          <select id="language" className="block h-6 w-[100px] appearance-none border border-[#adadad] bg-[#e3e3e3] pl-1 text-[14px] leading-5 font-bold">
            <option>简体中文</option>
          </select>
          <svg className="pointer-events-none absolute right-1 top-[9px]" width="9" height="6"><path d="M.5 .5L4.500 4.500L8.500 .5" fill="none" stroke="#555" /></svg>
        </div>
      </div>
      <div className="flex justify-end gap-[7px] pt-[7px] pr-[22px]">
        <button className="h-[21px] w-[73px] border-2 border-[#0f74cb] bg-[#e1e1e1] leading-4">好</button>
        <button className="h-[21px] w-[73px] border border-[#adadad] bg-[#e1e1e1] leading-4">取消</button>
      </div>
    </div>
  )
}

function SideTools() {
  return (
    <aside className="w-[72px] shrink-0 pt-[58px]">
      <div className="mx-[3px] mb-[3px] border-t-2 border-dotted border-[#b5b5b5]"></div>
      <div className="border-b border-[#a9a9ad] bg-[#f2f2f2] pl-[2px]">
        {sideGroups.map((group, index) => (
          <div key={index}>
            {index > 0 && <div className="flex h-2 w-[66px] items-center pl-[2px]"><div className="h-px w-full bg-[#777]"></div></div>}
            <div className="grid w-[68px] grid-cols-2">
              {group.map((name) => <ToolButton key={name} name={name} active={name === "select"} />)}
            </div>
          </div>
        ))}
      </div>
    </aside>
  )
}

function TrayPanel() {
  return (
    <aside className="w-[286px] shrink-0 border-l-2 border-white bg-[#f0f0f0] pl-1 pt-px">
      <div className="h-full bg-[#f4f7fc] text-[12px] text-black">
        <div className="flex h-[19px] items-center bg-linear-to-b from-[#b9c8d8] to-[#dfe8f3] pl-1 pr-1">
          <h2 className="grow">baidujingyan</h2>
          <button aria-label="固定" className="mr-2"><svg width="9" height="11"><path d="M2.500 6V.5H6.500V6M5.500 1V6M0 6.500H9M4.500 7V11" fill="none" stroke="#000" /></svg></button>
          <button aria-label="关闭面板" className="flex h-3 w-3 items-center justify-center bg-[#c94f55]"><svg width="6" height="6"><path d="M.5 .5L5.500 5.500M5.500 .5L.5 5.500" stroke="#fff" strokeWidth="1.500" /></svg></button>
        </div>
        {trays.map((tray) => (
          <section key={tray} className="flex h-[19px] items-center border-t border-b border-t-[#a0a0a0] border-b-white bg-linear-to-b from-[#e4e4e4] to-[#b4b4b4] pl-2 pr-[3px]">
            <svg className="mr-2" width="6" height="8"><path d="M0 0L6 4L0 8Z" /></svg>
            <h3 className="grow leading-4">{tray}</h3>
            <button aria-label={`关闭${tray}`} className="flex h-[14px] w-[13px] items-center justify-center border border-[#999] bg-[#ececec]"><svg width="5" height="5"><path d="M.5 .5L4.500 4.500M4.500 .5L.5 4.500" stroke="#000" strokeWidth="1.300" /></svg></button>
          </section>
        ))}
      </div>
    </aside>
  )
}

function StatusBar() {
  return (
    <footer className="flex h-7 shrink-0 items-center border-t border-white bg-[#f0f0f0] pl-[6px] pr-[5px] text-black">
      <svg className="h-[14px] w-[14px]" viewBox="0 0 14 14"><circle cx="7" cy="7" r="6.500" fill="#eee" stroke="#999" /><path d="M7 3Q10 3 9 6L7.500 8V11H6.500V8L5 6Q4 3 7 3Z" fill="#999" /></svg>
      <svg className="ml-4 h-[14px] w-[14px]" viewBox="0 0 14 14"><circle cx="7" cy="7" r="6.300" fill="none" stroke="#111" strokeWidth="1.400" /><circle cx="7" cy="3.500" r="1.300" /><path d="M5 6H9L8 11H6Z" /></svg>
      <div className="ml-3 h-[10px] w-px bg-[#999]"></div>
      <p className="ml-[10px] grow pb-px text-[16px] leading-6">选择对象。切换到扩充选择。拖动鼠标选择多项。</p>
      <input aria-label="数值" className="h-6 w-[160px] border border-[#a8acb8] bg-[#f0f0f0]" />
    </footer>
  )
}

const apps: { name: string, active?: boolean, art: ReactNode }[] = [
  { name: "浏览器", art: <><path d="M5 2Q14 -2 21 3Q25 12 20 20Q12 26 4 21Q-1 12 5 2Z" fill="#5cba35" /><path d="M6 12H19Q18 5 12 5T5 12T12 19Q17 19 18 16" fill="none" stroke="#fff" strokeWidth="3" /><path d="M1 20Q10 15 22 3" fill="none" stroke="#b6e88a" strokeWidth="1.500" /></> },
  { name: "UC", art: <><circle cx="12" cy="12" r="11.500" fill="#f07a10" /><path d="M22 4Q10 4 4 16L11 13L9 19Q15 18 15 13L21 12Q24 8 22 4Z" fill="#fff" /><path d="M14 23Q22 21 23 13L17 14Z" fill="#fbe6d0" /></> },
  { name: "收藏", art: <><path d="M12 1L16 7L23 9L20 15V22L12 21L4 22V15L1 9L8 7Z" fill="#f2d66a" stroke="#d2ac3c" strokeLinejoin="round" /><circle cx="9" cy="11" r="1" fill="#7a5a10" /><circle cx="15" cy="11" r="1" fill="#7a5a10" /><path d="M9 15Q12 18 15 15" fill="none" stroke="#a67c1c" /></> },
  { name: "Firefox", art: <><circle cx="12" cy="13" r="11" fill="#ff4a4a" /><path d="M14 0Q25 7 22 17Q18 24 11 23Q20 17 17 10Z" fill="#ffc12c" /><path d="M1 11Q3 5 5 2L8 6L14 8Z" fill="#ff9c28" /><circle cx="12" cy="13" r="5.500" fill="#6a35b8" /><path d="M6 10Q12 8 14 12L9 14Z" fill="#ff9c28" /></> },
  { name: "Chrome", art: <><circle cx="12" cy="12" r="11.500" fill="#34a04c" /><path d="M2 6Q6 .5 12 .5Q19 .5 22.500 7H12L7 15Z" fill="#e04434" /><path d="M22.500 7Q25 16 19 21Q15 24 11 23.500L17 14L15 7Z" fill="#fbc424" /><circle cx="12" cy="12" r="5.500" fill="#fff" /><circle cx="12" cy="12" r="4.300" fill="#3f7fe4" /></> },
  { name: "SketchUp", active: true, art: <SketchUpMark /> },
  { name: "压缩", art: <><path d="M0 2H24V14H0Z" fill="#32a7ee" /><path d="M0 10L8 6L24 15H0Z" fill="#8ad3f4" /><path d="M0 15H24V19H0Z" fill="#dba024" /><path d="M0 19H24V23H0Z" fill="#3c9a3c" /><path d="M15 1H20V24H15Z" fill="#6a2e14" /><path d="M14 12H21V17H14Z" fill="#c8b08a" stroke="#3a1a08" /></> },
]

function Taskbar() {
  return (
    <div className="flex h-10 shrink-0 items-center bg-linear-to-r from-[#d3d3d3] via-[#e7e7e3] via-70% to-[#cfcfcf] text-[12px] text-black">
      <button aria-label="开始" className="flex h-10 w-12 items-center justify-center"><svg width="16" height="17" viewBox="0 0 16 17"><path d="M0 2L7 1V8H0ZM8 1L16 0V8H8ZM0 9H7V16L0 15ZM8 9H16V17L8 16Z" /></svg></button>
      <button aria-label="搜索" className="flex h-10 w-12 items-center justify-center"><svg width="17" height="17"><circle cx="10.500" cy="6.500" r="5.500" fill="none" stroke="#111" strokeWidth="1.300" /><path d="M6.500 10.500L1 16" stroke="#111" strokeWidth="1.300" /></svg></button>
      <button aria-label="Cortana" className="mr-[2px] flex h-10 w-12 items-center justify-center"><svg width="16" height="16"><circle cx="8" cy="8" r="6.700" fill="none" stroke="#111" strokeWidth="2" /></svg></button>
      <div className="flex grow">
        {apps.map((app) => (
          <button key={app.name} aria-label={app.name} className={app.active ? "flex h-10 w-[49px] flex-col items-center bg-[#efefef]" : "flex h-10 w-[49px] flex-col items-center px-1"}>
            <svg className="mt-2 h-[22px] w-[22px]" viewBox="0 0 24 24">{app.art}</svg>
            <span className="mt-auto h-[2px] w-full bg-[#0f74cb]"></span>
          </button>
        ))}
      </div>
      <div className="flex h-10 items-center">
        <svg width="12" height="7"><path d="M.5 6.500L6 1L11.500 6.500" fill="none" stroke="#111" strokeWidth="1.300" /></svg>
        <span className="ml-[10px] text-[15px] leading-5 text-white [text-shadow:0_0_2px_#000,0_0_1px_#000]">英</span>
        <svg className="ml-3 h-4 w-4" viewBox="0 0 28 28"><SogouMark /></svg>
        <div className="ml-4 w-[62px] text-center leading-5 whitespace-nowrap"><div>16:58</div><div>2021/5/19</div></div>
        <div className="relative ml-[17px] mr-2 h-10 w-7">
          <svg className="absolute left-0 top-3" width="28" height="24"><path d="M0 0H16V12H9L6 16V12H0Z" /><path d="M3 3.500H13M3 6.500H13M3 9.500H9" stroke="#ddd" /><circle cx="15.500" cy="15.500" r="8" fill="#d2d2d2" stroke="#777" /></svg>
          <span className="absolute left-[12px] top-[18px] font-bold leading-5">4</span>
        </div>
      </div>
      <div className="mr-1 h-10 w-px bg-[#aaa]"></div>
    </div>
  )
}

function SogouMark() {
  return (
    <>
      <path d="M3 2L22 0Q25 0 25 3L28 21Q28 24 25 25L7 28Q4 28 4 25L0 6Q0 3 3 2Z" fill="#ee5426" />
      <path d="M22 7Q8 4 7 10Q7 13 14 13T21 17Q20 22 6 20" fill="none" stroke="#fff" strokeWidth="4" />
    </>
  )
}

function InputBar() {
  return (
    <div className="absolute right-0 top-[779px] flex h-7 w-[206px] items-center">
      <div className="ml-[14px] flex h-6 grow items-center border-t border-b border-[#9fa8ba] bg-white pl-5 font-bold text-[#1f70c0]">
        <button className="text-[15px] leading-5">英</button>
        <svg className="ml-[9px] shrink-0" width="144" height="18" fill="#1f70c0">
          <circle cx="3" cy="6" r="2" /><path d="M8 8Q11 7 10 11L8 13Z" />
          <circle cx="27" cy="9" r="7" fill="none" stroke="#1f70c0" strokeWidth="1.600" /><circle cx="25" cy="7" r="1" /><circle cx="29" cy="7" r="1" /><path d="M23 10Q27 15 31 10" fill="none" stroke="#1f70c0" strokeWidth="1.400" />
          <rect x="46" y="1" width="6" height="10" rx="3" /><path d="M44 7Q44 13 49 13T54 7M49 13V17" fill="none" stroke="#1f70c0" strokeWidth="1.500" />
          <rect x="64" y="4" width="14" height="10" rx="1" fill="none" stroke="#1f70c0" strokeWidth="1.600" /><path d="M66 7H76M66 9.500H76M68 12H74" stroke="#1f70c0" strokeDasharray="2 1" />
          <circle cx="93" cy="5" r="3" fill="#b9c2d4" /><path d="M88 16Q88 9 93 9T98 16Z" fill="#b9c2d4" /><rect x="95" y="9" width="6" height="7" fill="#eef" stroke="#b9c2d4" />
          <path d="M108 4L112 2Q115 5 118 2L122 4L120 8L119 7V16H111V7L110 8Z" />
          <path d="M130 3H136V9H130ZM130 10H136V16H130ZM137 10H143V16H137Z" /><rect x="138" y="3.500" width="5" height="5" fill="#fff" stroke="#1f70c0" />
        </svg>
      </div>
      <svg className="absolute left-0 top-0 h-[26px] w-7" viewBox="0 0 28 28"><SogouMark /></svg>
    </div>
  )
}

function Watermark() {
  return (
    <div className="absolute right-[106px] top-[893px] flex h-40 w-[340px] items-center bg-[#222f56] pl-[26px] text-[#c8c9cd]">
      <svg className="absolute -top-[18px] left-[142px]" width="60" height="18"><path d="M2 18Q2 2 13 2T25 18" fill="#eeeef0" stroke="#c4c4c8" /><path d="M32 18Q34 4 44 4T57 18" fill="#fff" stroke="#c9ccd2" /></svg>
      <svg className="h-[66px] w-16 shrink-0" viewBox="0 0 64 66" fill="none" stroke="#c8c9cd">
        <path d="M3 9V46Q4 66 22 62Q42 54 56 44Q68 34 56 21Q40 8 24 3Q14 1 14 12V47Q15 53 22 50" strokeWidth="5" />
        <path d="M25 24V39L36 32Z" fill="#c8c9cd" stroke="none" />
        <path d="M42.500 26V38" strokeWidth="3" />
      </svg>
      <div className="ml-6 w-[202px]">
        <div className="flex justify-between font-['Liberation_Sans','Noto_Sans_CJK_SC',sans-serif] text-[42px] leading-[48px] font-bold"><span>溜</span><span>溜</span><span>自</span><span>学</span></div>
        <div className="font-['DejaVu_Sans',sans-serif] text-[24px] leading-7 font-extralight whitespace-nowrap">zixue.3D66.COM</div>
      </div>
    </div>
  )
}

export default function App() {
  return (
    <div className="relative flex min-h-screen flex-col overflow-hidden bg-[#f0f0f0] font-['Open_Sans','Noto_Sans_CJK_SC',sans-serif]">
      <TitleBar />
      <div className="pt-[2px]">
        <div className="flex pl-[65px]"><Toolbar items={plugins} /></div>
        <div className="flex">
          <Toolbar items={curves} />
          <Toolbar items={pushes} />
          <Toolbar items={["tree"]} />
        </div>
        <div className="flex">
          <Toolbar items={cameras} />
          <div className="w-[37px] shrink-0"></div>
          <Toolbar items={["pointer", "dcOptions", "dcAttr"]} />
          <div className="w-[806px] shrink-0"></div>
          <Toolbar items={["layerS", "layerW", "layerR", "layerB"]} />
          <Toolbar items={["section", "sectionPlane", "sectionCut", "sectionFill"]} active={["sectionCut", "sectionFill"]} />
        </div>
        <div className="flex">
          <Toolbar items={mainTools} active={["select"]} />
          <Toolbar items={styleTools} active={["textured"]} />
          <Toolbar items={["iso", "top", "front", "right", "back", "left"]} />
          <Toolbar items={["shell", "|", "intersect", "union", "subtract", "trim"]} />
          <Toolbar items={["warehouse", "shareUp", "shareGrey", "shareGem"]} />
          <Toolbar items={["pipe"]} />
          <Toolbar items={["stone", "morph", "mesh"]} />
        </div>
      </div>
      <div className="flex grow">
        <SideTools />
        <main className="relative grow border-t border-l-2 border-[#7b7b82]">
          <Scene />
          <LanguageDialog />
          <svg className="absolute left-[850px] top-[362px]" width="480" height="330">
            <path d="M4 4L20 6L17 11L473 320L471 322L14 16L11 18Z" fill="#ee1c25" />
          </svg>
        </main>
        <TrayPanel />
      </div>
      <StatusBar />
      <Taskbar />
      <InputBar />
      <Watermark />
    </div>
  )
}
